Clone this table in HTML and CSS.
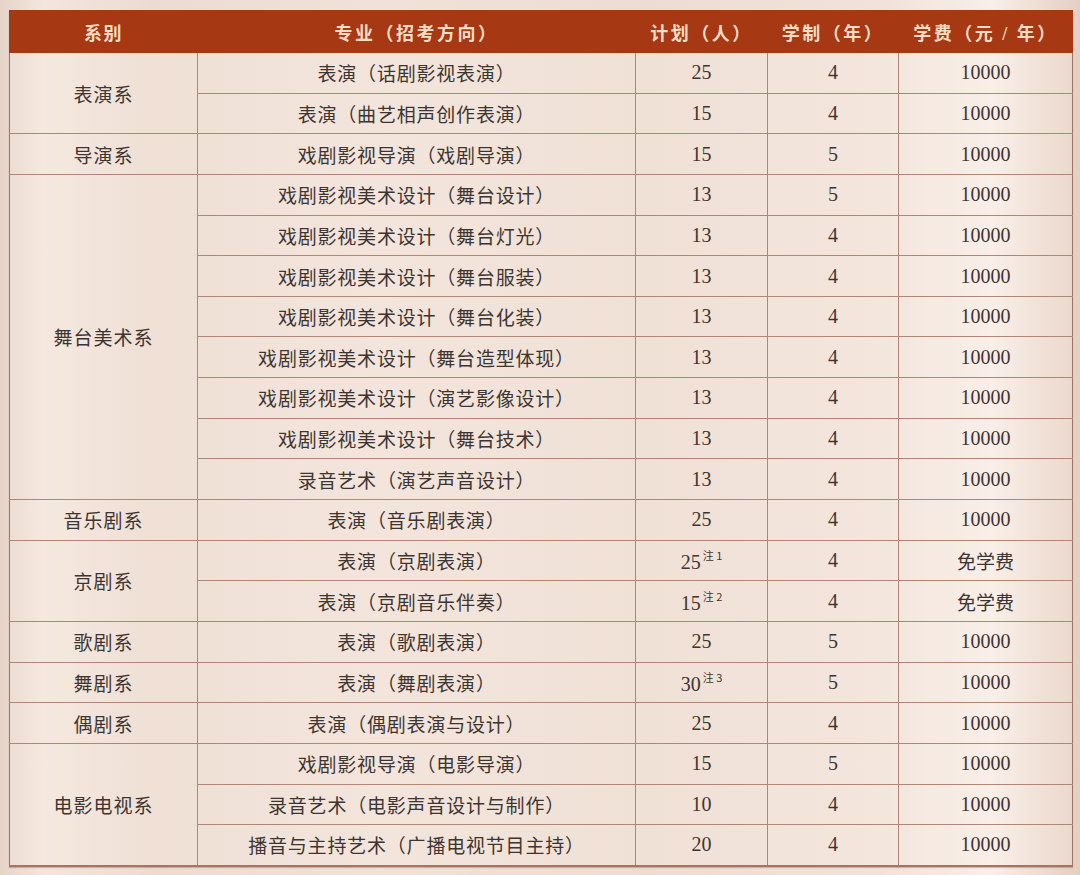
FILE: index.html
```html
<!DOCTYPE html>
<html lang="zh-CN">
<head>
<meta charset="utf-8">
<link rel="stylesheet" href="styles.css">
</head>
<body>
<div class="page">
<table class="plan">
  <colgroup>
    <col class="c1"><col class="c2"><col class="c3"><col class="c4"><col class="c5">
  </colgroup>
  <thead>
    <tr><th class="dept-h">系别</th><th>专业（招考方向）</th><th>计划（人）</th><th>学制（年）</th><th>学费（元 / 年）</th></tr>
  </thead>
  <tbody>
    <tr><td rowspan="2" class="dept">表演系</td><td class="major">表演（话剧影视表演）</td><td class="num">25</td><td class="num">4</td><td class="num">10000</td></tr>
    <tr><td class="major">表演（曲艺相声创作表演）</td><td class="num">15</td><td class="num">4</td><td class="num">10000</td></tr>
    <tr><td class="dept">导演系</td><td class="major">戏剧影视导演（戏剧导演）</td><td class="num">15</td><td class="num">5</td><td class="num">10000</td></tr>
    <tr><td rowspan="8" class="dept">舞台美术系</td><td class="major">戏剧影视美术设计（舞台设计）</td><td class="num">13</td><td class="num">5</td><td class="num">10000</td></tr>
    <tr><td class="major">戏剧影视美术设计（舞台灯光）</td><td class="num">13</td><td class="num">4</td><td class="num">10000</td></tr>
    <tr><td class="major">戏剧影视美术设计（舞台服装）</td><td class="num">13</td><td class="num">4</td><td class="num">10000</td></tr>
    <tr><td class="major">戏剧影视美术设计（舞台化装）</td><td class="num">13</td><td class="num">4</td><td class="num">10000</td></tr>
    <tr><td class="major">戏剧影视美术设计（舞台造型体现）</td><td class="num">13</td><td class="num">4</td><td class="num">10000</td></tr>
    <tr><td class="major">戏剧影视美术设计（演艺影像设计）</td><td class="num">13</td><td class="num">4</td><td class="num">10000</td></tr>
    <tr><td class="major">戏剧影视美术设计（舞台技术）</td><td class="num">13</td><td class="num">4</td><td class="num">10000</td></tr>
    <tr><td class="major">录音艺术（演艺声音设计）</td><td class="num">13</td><td class="num">4</td><td class="num">10000</td></tr>
    <tr><td class="dept">音乐剧系</td><td class="major">表演（音乐剧表演）</td><td class="num">25</td><td class="num">4</td><td class="num">10000</td></tr>
    <tr><td rowspan="2" class="dept">京剧系</td><td class="major">表演（京剧表演）</td><td class="num">25<sup>注 1</sup></td><td class="num">4</td><td>免学费</td></tr>
    <tr><td class="major">表演（京剧音乐伴奏）</td><td class="num">15<sup>注 2</sup></td><td class="num">4</td><td>免学费</td></tr>
    <tr><td class="dept">歌剧系</td><td class="major">表演（歌剧表演）</td><td class="num">25</td><td class="num">5</td><td class="num">10000</td></tr>
    <tr><td class="dept">舞剧系</td><td class="major">表演（舞剧表演）</td><td class="num">30<sup>注 3</sup></td><td class="num">5</td><td class="num">10000</td></tr>
    <tr><td class="dept">偶剧系</td><td class="major">表演（偶剧表演与设计）</td><td class="num">25</td><td class="num">4</td><td class="num">10000</td></tr>
    <tr><td rowspan="3" class="dept">电影电视系</td><td class="major">戏剧影视导演（电影导演）</td><td class="num">15</td><td class="num">5</td><td class="num">10000</td></tr>
    <tr><td class="major">录音艺术（电影声音设计与制作）</td><td class="num">10</td><td class="num">4</td><td class="num">10000</td></tr>
    <tr><td class="major">播音与主持艺术（广播电视节目主持）</td><td class="num">20</td><td class="num">4</td><td class="num">10000</td></tr>
  </tbody>
</table>
</div>
</body>
</html>
```

FILE: styles.css
```css
html, body {
  margin: 0;
  padding: 0;
}
body {
  width: 1080px;
  height: 875px;
  overflow: hidden;
  background: linear-gradient(90deg, #e6d3c8 0%, #f3e6dd 4%, #ecdbd0 14%, #f0e2d8 35%, #eddcd1 60%, #f1e3da 82%, #f8efe8 92%, #ecdacf 97%, #e4cfc3 100%);
  font-family: "Liberation Serif", "Noto Sans CJK SC", serif;
  color: #3d3532;
}
.page {
  padding: 10px 8px 0 9px;
}
.plan {
  width: 1063px;
  border-collapse: collapse;
  table-layout: fixed;
  box-shadow: 0 1px 1px rgba(150, 90, 70, 0.35);
}
.c1 { width: 188px; }
.c2 { width: 438px; }
.c3 { width: 132px; }
.c4 { width: 131px; }
.c5 { width: 174px; }
.plan th {
  height: 41px;
  padding: 0;
  background: #a63814;
  color: #f5dcc4;
  font-size: 18px;
  font-weight: 700;
  text-align: center;
  vertical-align: middle;
  letter-spacing: 2.5px;
  border: 1px solid #a63814;
}
.plan th.dept-h {
  letter-spacing: 1.5px;
}
.plan td {
  height: 39.65px;
  padding: 0;
  font-size: 19px;
  text-align: center;
  vertical-align: middle;
  border: 1px solid #b08674;
  background: rgba(250, 238, 230, 0.25);
}
.plan td.major {
  letter-spacing: 0.8px;
}
.plan td.num {
  font-size: 20px;
}
.plan tbody tr:last-child td,
.plan td.dept[rowspan="3"] {
  border-bottom: 2px solid #a57563;
}
.plan td:first-child { border-left: 1px solid #a57563; }
.plan td:last-child { border-right: 1px solid #a57563; }
.plan td.dept {
  letter-spacing: 1px;
}
.plan sup {
  font-size: 11px;
  vertical-align: 9px;
  margin-left: 2px;
  font-family: "Noto Sans CJK SC", serif;
}
```
